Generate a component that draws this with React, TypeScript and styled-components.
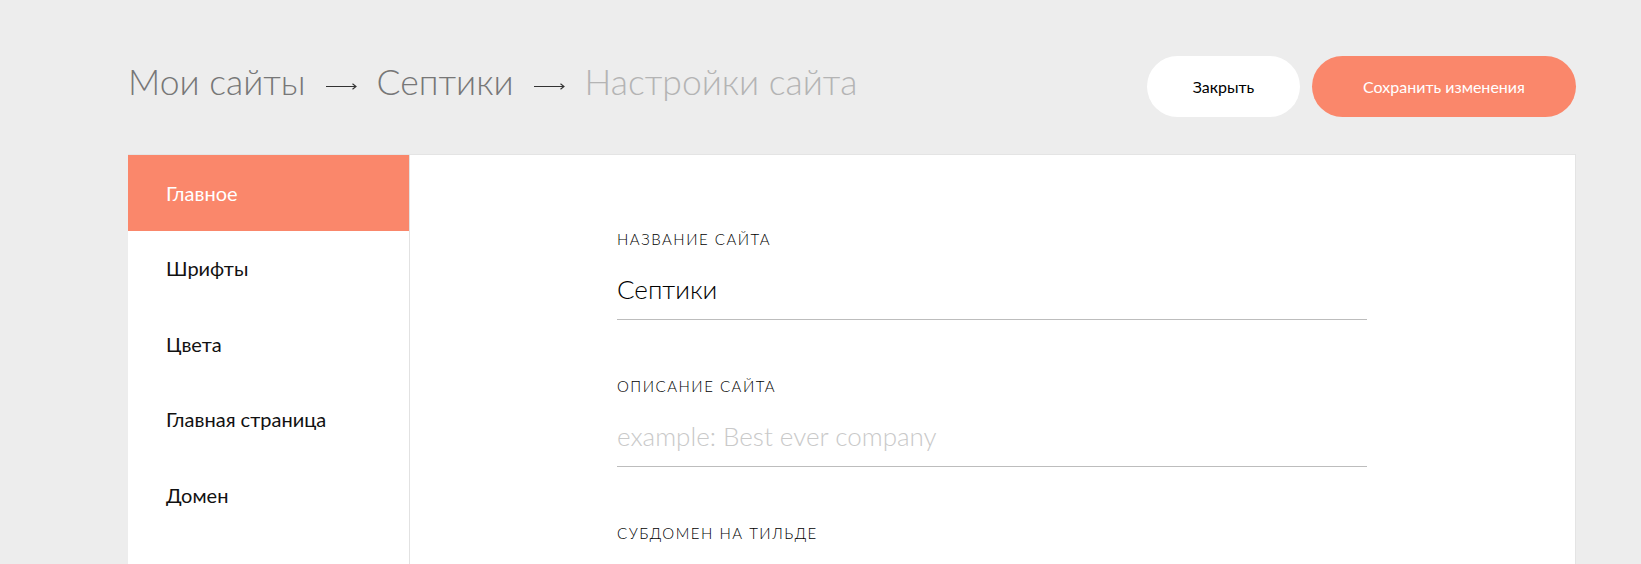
import React, { FC } from "react";
import styled, { createGlobalStyle } from "styled-components";

const GlobalStyle = createGlobalStyle`
    html, body {
        margin: 0;
        padding: 0;
        background-color: #ededed;
        font-family: "Lato", "Open Sans", sans-serif;
        color: #000;
        overflow: hidden;
    }
    * {
        box-sizing: border-box;
    }
`;

const Page = styled.div`
    padding: 56px 65px 0 128px;
    height: 564px;
`;

const Header = styled.header`
    display: flex;
    justify-content: space-between;
    align-items: center;
    height: 61px;
    margin-bottom: 37px;
`;

const Crumbs = styled.nav`
    display: flex;
    align-items: center;
    gap: 20px;
    margin-top: -10px;
`;

const Crumb = styled.span<{ current?: boolean }>`
    font-size: 35.5px;
    font-weight: 300;
    color: ${({ current }) => (current ? "#b4b4b4" : "#777")};
    white-space: nowrap;
`;

const Arrow = styled.svg`
    width: 31px;
    height: 10px;
    margin-top: 8px;
    flex: none;
`;

const Actions = styled.div`
    display: flex;
    gap: 12px;
`;

const Button = styled.button<{ primary?: boolean }>`
    height: 61px;
    border: none;
    border-radius: 31px;
    padding: 0 ${({ primary }) => (primary ? "43px" : "44px")};
    min-width: ${({ primary }) => (primary ? "264px" : "153px")};
    font-family: inherit;
    font-size: 16px;
    font-weight: 400;
    background-color: ${({ primary }) => (primary ? "#fa876b" : "#fff")};
    color: ${({ primary }) => (primary ? "#fff" : "#000")};
    cursor: pointer;
`;

const Panel = styled.section`
    display: flex;
    background-color: #fff;
    border-top: 1px solid #e4e4e4;
    border-right: 1px solid #e4e4e4;
    height: 410px;
    overflow: hidden;
`;

const Sidebar = styled.aside`
    width: 282px;
    flex: none;
    border-right: 1px solid #e2e2e2;
    display: flex;
    flex-direction: column;
`;

const NavItem = styled.a<{ active?: boolean }>`
    display: flex;
    align-items: center;
    flex: none;
    height: 75.5px;
    padding-left: 38px;
    font-size: 20px;
    font-weight: 400;
    text-decoration: none;
    background-color: ${({ active }) => (active ? "#fa876b" : "transparent")};
    color: ${({ active }) => (active ? "#fff" : "#111")};
    cursor: pointer;
`;

const Content = styled.div`
    flex: 1;
    padding: 74px 0 0 207px;
`;

const Form = styled.form`
    width: 750px;
    display: flex;
    flex-direction: column;
    gap: 56px;
`;

const Field = styled.label`
    display: flex;
    flex-direction: column;
    gap: 23px;
`;

const Label = styled.span`
    font-size: 15px;
    line-height: 20px;
    font-weight: 300;
    letter-spacing: 1.5px;
    text-transform: uppercase;
    color: #000;
`;

const Input = styled.input`
    height: 48px;
    border: none;
    border-bottom: 1px solid #bdbdbd;
    padding: 0 0 13px;
    font-family: inherit;
    font-size: 26px;
    font-weight: 300;
    color: #000;
    background: transparent;
    outline: none;

    &::placeholder {
        color: #c9c9c9;
    }
`;

const ArrowIcon: FC = () => (
    <Arrow viewBox="0 0 31 10">
        <path d="M0 5.5 H30 M26.5 2.8 L30 5.5 L26.5 8.2" fill="none" stroke="#333" strokeWidth="1.1" />
    </Arrow>
);

const navItems = ["Главное", "Шрифты", "Цвета", "Главная страница", "Домен"];

const App: FC = () => {
    return (
        <>
            <GlobalStyle />
            <Page>
                <Header>
                    <Crumbs>
                        <Crumb>Мои сайты</Crumb>
                        <ArrowIcon />
                        <Crumb>Септики</Crumb>
                        <ArrowIcon />
                        <Crumb current>Настройки сайта</Crumb>
                    </Crumbs>
                    <Actions>
                        <Button>Закрыть</Button>
                        <Button primary>Сохранить изменения</Button>
                    </Actions>
                </Header>
                <Panel>
                    <Sidebar>
                        {navItems.map((title, index) => (
                            <NavItem key={title} active={index === 0}>{title}</NavItem>
                        ))}
                    </Sidebar>
                    <Content>
                        <Form onSubmit={(e) => e.preventDefault()}>
                            <Field>
                                <Label>Название сайта</Label>
                                <Input defaultValue="Септики" />
                            </Field>
                            <Field>
                                <Label>Описание сайта</Label>
                                <Input placeholder="example: Best ever company" />
                            </Field>
                            <Field>
                                <Label>Субдомен на Тильде</Label>
                                <Input />
                            </Field>
                        </Form>
                    </Content>
                </Panel>
            </Page>
        </>
    );
};

export default App;
